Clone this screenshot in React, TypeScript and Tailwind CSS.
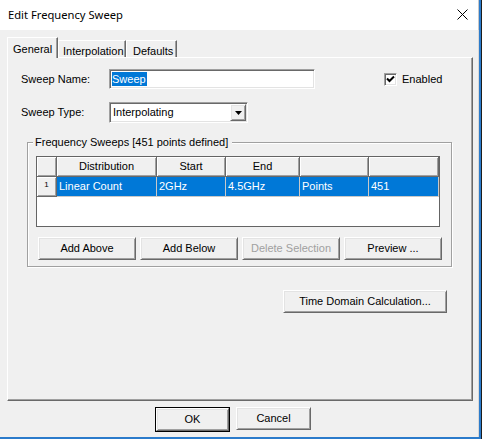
import React from "react";

const raised =
  "bg-[#f0f0f0] border border-t-white border-l-white border-r-[#696969] border-b-[#696969] shadow-[inset_1px_1px_0_#e3e3e3,inset_-1px_-1px_0_#a0a0a0]";
const sunken =
  "bg-white border border-t-[#a0a0a0] border-l-[#a0a0a0] border-r-white border-b-white shadow-[inset_1px_1px_0_#696969,inset_-1px_-1px_0_#e3e3e3]";

function Btn({
  w,
  children,
  disabled,
  cls = "",
}: {
  w: string;
  children: React.ReactNode;
  disabled?: boolean;
  cls?: string;
}) {
  return (
    <div
      className={`${raised} ${w} h-[23px] flex items-center justify-center text-[11px] ${
        disabled ? "text-[#a0a0a0]" : "text-black"
      } ${cls}`}
    >
      {children}
    </div>
  );
}

const headCell =
  "bg-[#f0f0f0] border-r border-b border-r-[#696969] border-b-[#696969] shadow-[inset_1px_1px_0_#fff,inset_-1px_-1px_0_#a0a0a0] flex items-center justify-center";
const dataCell =
  "bg-[#0078d7] text-white border-r border-b border-[#c8c8c8] flex items-center pl-[2px]";

export default function App() {
  return (
    <div className="w-[482px] h-[439px] bg-[#1c1c1c] font-['Liberation_Sans',Arial,sans-serif] text-[11px] text-black">
      <div className="w-[481px] h-[439px] border-r-2 border-b-2 border-[#2b7bcb] bg-[#f0f0f0] flex flex-col">
        {/* Title bar */}
        <div className="h-[30px] bg-white flex items-center justify-between pl-[8px] pr-[10px] border-r border-[#c8c8c8]">
          <span className="font-['Noto_Sans',sans-serif] text-[11.2px] text-black leading-none">
            Edit Frequency Sweep
          </span>
          <svg width="11" height="11" viewBox="0 0 11 11" className="mb-px">
            <path d="M0.5 0.5 L10.5 10.5 M10.5 0.5 L0.5 10.5" stroke="#000" strokeWidth="1" />
          </svg>
        </div>

        <div className="flex-1 flex flex-col border-r border-[#d8d8d8]">
          {/* Tabs */}
          <div className="mt-[7px] ml-[7px] h-[20px] flex items-end">
            <div className="relative z-10 w-[51px] h-[21px] -mb-px bg-[#f0f0f0] border-t border-l border-white border-r border-r-[#696969] shadow-[inset_-1px_0_0_#a0a0a0] flex pt-[3px] pl-[5px]">
              General
            </div>
            <div className="w-[68px] h-[17px] border-t border-l border-white border-r border-r-[#696969] shadow-[inset_-1px_0_0_#a0a0a0] flex pt-[2px] pl-[4px]">
              Interpolation
            </div>
            <div className="w-[51px] h-[17px] border-t border-l border-white border-r border-r-[#696969] shadow-[inset_-1px_0_0_#a0a0a0] flex pt-[2px] pl-[6px]">
              Defaults
            </div>
          </div>

          {/* Panel */}
          <div className="ml-[7px] w-[466px] h-[344px] border-t border-l border-white border-r border-b border-r-[#696969] border-b-[#696969] shadow-[inset_-1px_-1px_0_#a0a0a0] flex flex-col">
            {/* Row 1 */}
            <div className="mt-[11px] h-[20px] flex items-center pl-[13px]">
              <div className="w-[88px]">Sweep Name:</div>
              <div className={`${sunken} w-[206px] h-[20px] flex items-center pl-[2px]`}>
                <span className="bg-[#0078d7] text-white h-[14px] leading-[14px] pr-px">Sweep</span>
              </div>
              <div className={`${sunken} ml-[69px] w-[13px] h-[13px] flex items-center justify-center`}>
                <svg width="9" height="9" viewBox="0 0 9 9">
                  <path d="M1 3.5 L3.5 6 L8 1.5" stroke="#000" strokeWidth="2" fill="none" />
                </svg>
              </div>
              <div className="ml-[5px]">Enabled</div>
            </div>

            {/* Row 2 */}
            <div className="mt-[13px] h-[21px] flex items-center pl-[13px]">
              <div className="w-[88px]">Sweep Type:</div>
              <div className={`${sunken} w-[139px] h-[21px] p-px flex items-center`}>
                <div className="flex-1 pl-[2px]">Interpolating</div>
                <div className={`${raised} w-[16px] h-full flex items-center justify-center`}>
                  <svg width="7" height="4" viewBox="0 0 7 4">
                    <path d="M0 0 H7 L3.5 4 Z" fill="#000" />
                  </svg>
                </div>
              </div>
            </div>

            {/* Group */}
            <fieldset className="mt-[13px] ml-[19px] w-[425px] border border-[#a0a0a0] shadow-[inset_1px_1px_0_#fff,1px_1px_0_#fff] pb-[6px]">
              <legend className="ml-[5px] pl-[2px] pr-[4px] h-[13px] leading-[13px] bg-[#f0f0f0]">
                Frequency Sweeps [451 points defined]
              </legend>
              <div className="mt-[7px] ml-[8px] w-[404px] h-[71px] border border-[#646464] bg-white flex flex-col">
                <div className="flex h-[20px]">
                  <div className={`${headCell} w-[20px]`}></div>
                  <div className={`${headCell} w-[100px]`}>Distribution</div>
                  <div className={`${headCell} w-[69px]`}>Start</div>
                  <div className={`${headCell} w-[74px]`}>End</div>
                  <div className={`${headCell} w-[69px]`}></div>
                  <div className={`${headCell} w-[70px]`}></div>
                </div>
                <div className="flex h-[20px]">
                  <div className={`${headCell} w-[20px] text-[8px] pb-[3px]`}>1</div>
                  <div className={`${dataCell} w-[100px]`}>Linear Count</div>
                  <div className={`${dataCell} w-[69px]`}>2GHz</div>
                  <div className={`${dataCell} w-[74px]`}>4.5GHz</div>
                  <div className={`${dataCell} w-[69px]`}>Points</div>
                  <div className={`${dataCell} w-[70px]`}>451</div>
                </div>
              </div>
              <div className="mt-[10px] ml-[10px] flex gap-[4px]">
                <Btn w="w-[98px]">Add Above</Btn>
                <Btn w="w-[98px]">Add Below</Btn>
                <Btn w="w-[98px]" disabled>
                  Delete Selection
                </Btn>
                <Btn w="w-[98px]">Preview ...</Btn>
              </div>
            </fieldset>

            <div className="mt-[23px] ml-[275px]">
              <Btn w="w-[164px]">Time Domain Calculation...</Btn>
            </div>
          </div>

          {/* Footer */}
          <div className="mt-[6px] pl-[155px] flex gap-[6px]">
            <div className="border border-black">
              <Btn w="w-[73px]" cls="h-[21px]">OK</Btn>
            </div>
            <Btn w="w-[75px]">Cancel</Btn>
          </div>
        </div>
      </div>
    </div>
  );
}
